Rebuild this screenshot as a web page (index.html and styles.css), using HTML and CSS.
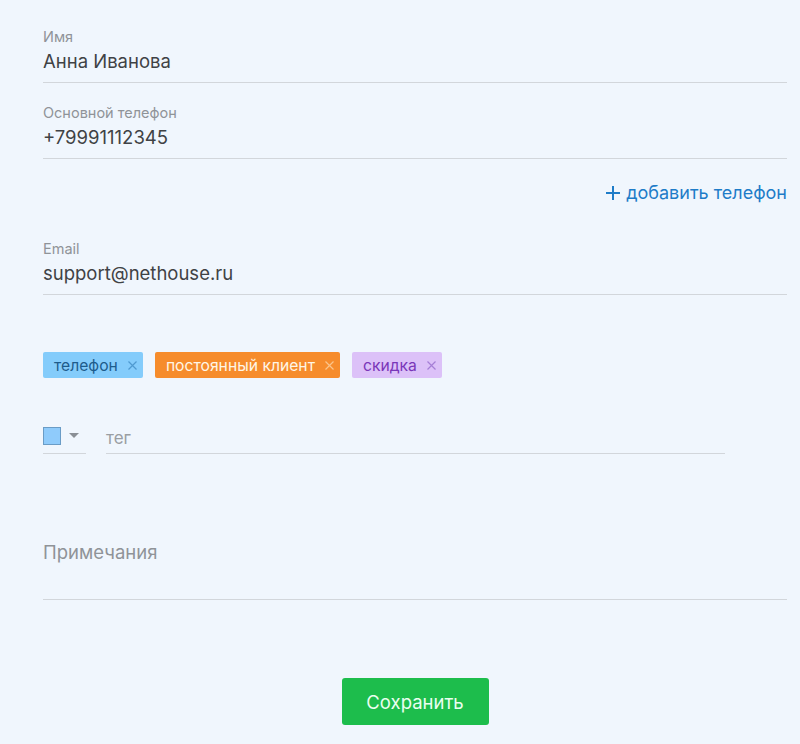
FILE: index.html
```html
<!DOCTYPE html>
<html lang="ru">
<head>
<meta charset="utf-8">
<link rel="stylesheet" href="styles.css">
</head>
<body>
<div class="form">
  <div class="field first">
    <div class="label">Имя</div>
    <div class="value">Анна Иванова</div>
  </div>
  <div class="field">
    <div class="label">Основной телефон</div>
    <div class="value">+79991112345</div>
  </div>
  <div class="add-row">
    <a class="add-link"><svg class="plus" width="14" height="14" viewBox="0 0 14 14"><path d="M7 0 V14 M0 7 H14" stroke="#1e7cc8" stroke-width="2"/></svg>добавить телефон</a>
  </div>
  <div class="field email">
    <div class="label">Email</div>
    <div class="value">support@nethouse.ru</div>
  </div>
  <div class="tags">
    <span class="tag tag-blue">телефон<svg class="x" width="9" height="9" viewBox="0 0 9 9"><path d="M0.5 0.5 L8.5 8.5 M8.5 0.5 L0.5 8.5" stroke="#4f9ad0" stroke-width="1.2"/></svg></span>
    <span class="tag tag-orange">постоянный клиент<svg class="x" width="9" height="9" viewBox="0 0 9 9"><path d="M0.5 0.5 L8.5 8.5 M8.5 0.5 L0.5 8.5" stroke="#fbc48a" stroke-width="1.2"/></svg></span>
    <span class="tag tag-purple">скидка<svg class="x" width="9" height="9" viewBox="0 0 9 9"><path d="M0.5 0.5 L8.5 8.5 M8.5 0.5 L0.5 8.5" stroke="#a57ed6" stroke-width="1.2"/></svg></span>
  </div>
  <div class="tag-new">
    <div class="color-pick">
      <span class="swatch"></span>
      <svg class="caret" width="10" height="6" viewBox="0 0 10 6"><path d="M0 0 L10 0 L5 5 Z" fill="#8a8f95"/></svg>
    </div>
    <div class="tag-input">тег</div>
  </div>
  <div class="notes">
    <div class="notes-label">Примечания</div>
  </div>
  <div class="actions">
    <button class="save">Сохранить</button>
  </div>
</div>
</body>
</html>
```
FILE: styles.css
```css
html, body {
  margin: 0;
  padding: 0;
  background: #f0f6fd;
}
body {
  font-family: Inter, "Noto Sans", sans-serif;
  color: #333;
}
.form {
  width: 744px;
  margin-left: 43px;
  padding-top: 28px;
}
.field {
  border-bottom: 1px solid #d2d6db;
  padding-bottom: 8px;
  margin-bottom: 21px;
}
.label {
  font-size: 14.5px;
  line-height: 18px;
  color: #8f9398;
}
.value {
  font-size: 18.5px;
  line-height: 26px;
  color: #3f4245;
  margin-top: 2px;
}
.add-row {
  display: flex;
  justify-content: flex-end;
  padding-top: 3px;
  margin-bottom: 37px;
}
.add-link {
  color: #1e7cc8;
  font-size: 18px;
  line-height: 20px;
  display: flex;
  align-items: center;
}
.plus {
  margin-right: 6px;
}
.email {
  margin-bottom: 57px;
}
.tags {
  display: flex;
  gap: 12px;
  margin-bottom: 49px;
}
.tag {
  display: inline-flex;
  align-items: center;
  height: 26px;
  padding: 0 6px 0 11px;
  border-radius: 2px;
  font-size: 15.7px;
}
.x {
  margin-left: 10px;
}
.tag-blue { background: #84ccfb; color: #1e5c8c; }
.tag-orange { background: #f68c2c; color: #fff6e6; }
.tag-purple { background: #dcc1f8; color: #7a36b8; }
.tag-new {
  display: flex;
  align-items: flex-end;
  gap: 20px;
}
.color-pick {
  width: 43px;
  height: 26px;
  border-bottom: 1px solid #d2d6db;
  display: flex;
  align-items: flex-start;
}
.swatch {
  width: 18px;
  height: 18px;
  background: #8fcbfb;
  border: 1px solid #6a9cc6;
  box-sizing: border-box;
}
.caret {
  margin-left: 8px;
  margin-top: 6px;
}
.tag-input {
  width: 619px;
  border-bottom: 1px solid #d2d6db;
  font-size: 17px;
  line-height: 22px;
  padding-bottom: 4px;
  color: #9a9ea3;
}
.notes {
  margin-top: 87px;
  border-bottom: 1px solid #d2d6db;
  height: 58px;
}
.notes-label {
  font-size: 18.5px;
  line-height: 22px;
  color: #8f9398;
}
.actions {
  display: flex;
  justify-content: center;
  padding-top: 78px;
}
.save {
  width: 147px;
  height: 47px;
  background: #1dbd4c;
  color: #eafff0;
  border: none;
  border-radius: 3px;
  font-family: Inter, "Noto Sans", sans-serif;
  font-size: 18.5px;
}
```
